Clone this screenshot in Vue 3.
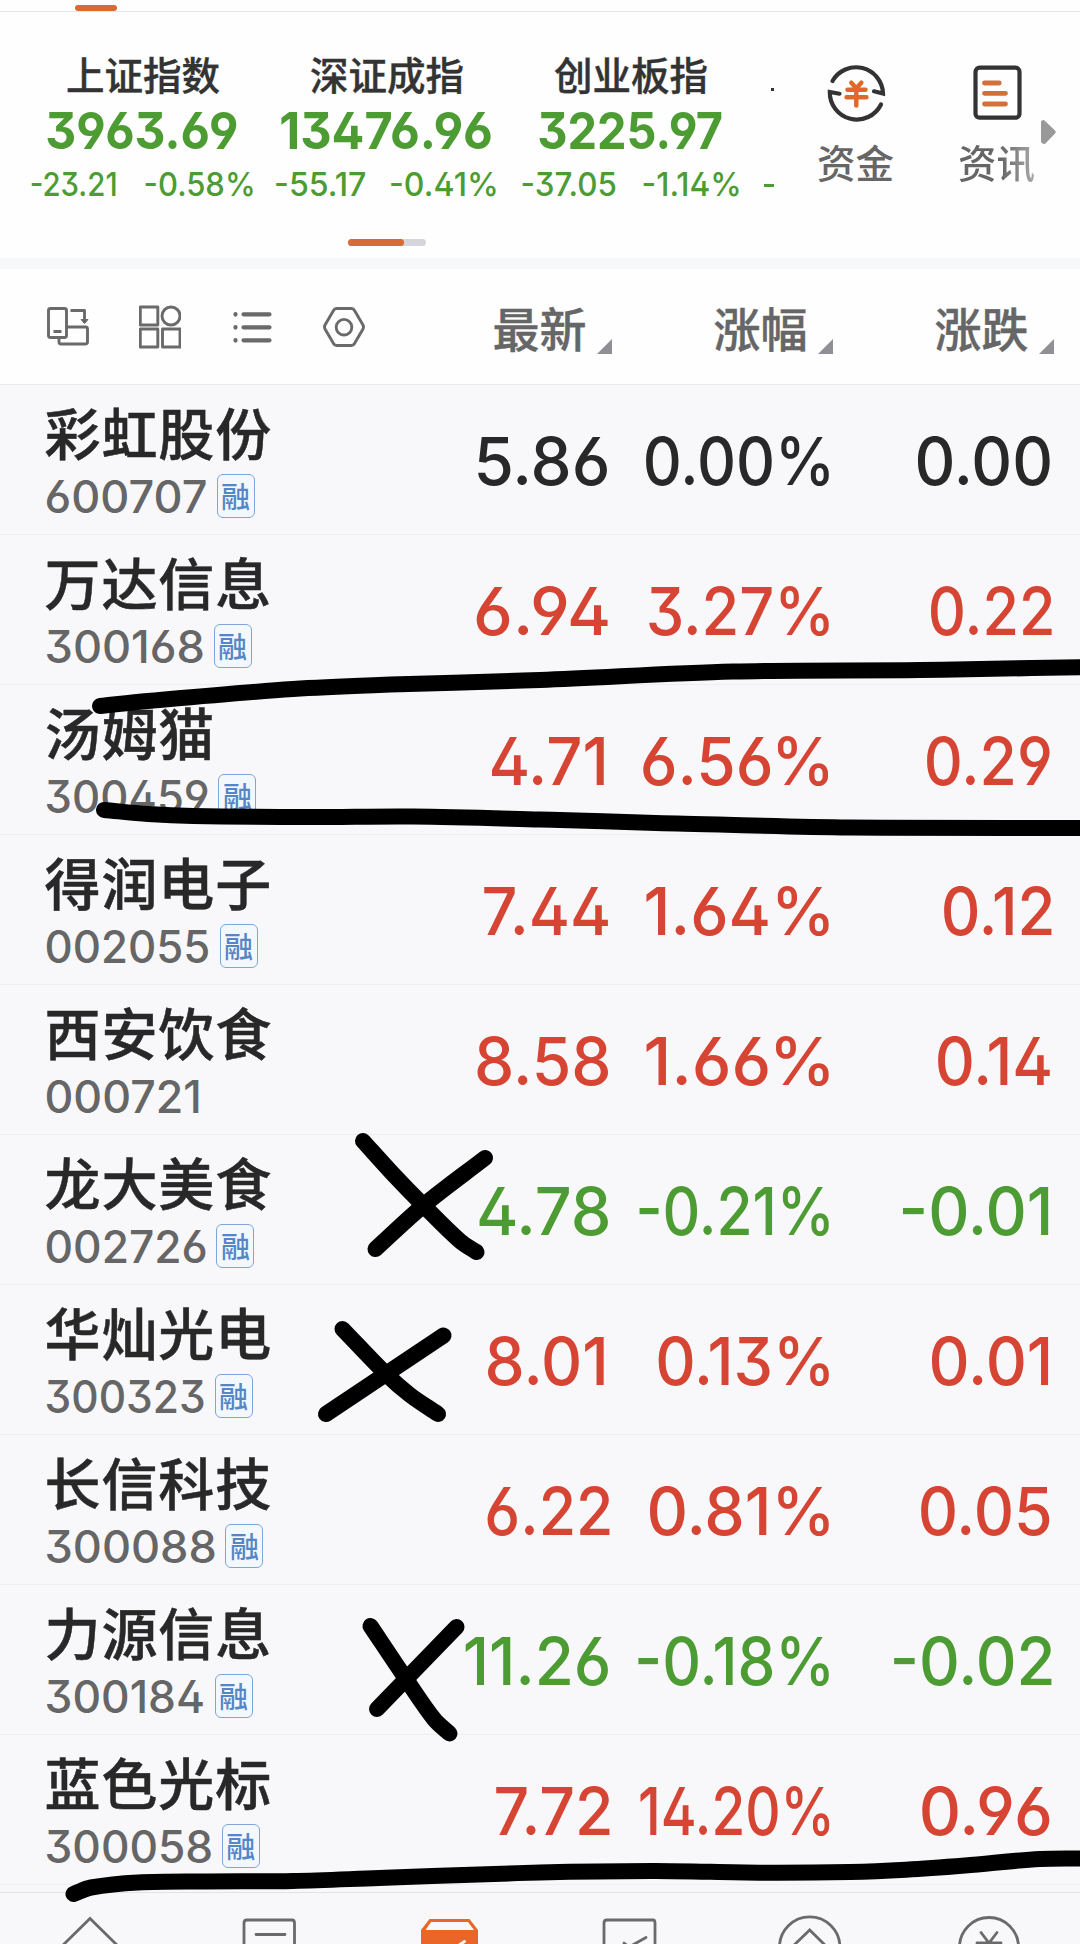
<script setup>
const indices = [
  {
    name: '上证指数',
    value: ['3963.69', 46.5, 238],
    change: ['-23.21', 31, 117],
    percent: ['-0.58%', 145, 254],
  },
  {
    name: '深证成指',
    value: ['13476.96', 280.6, 492.4],
    change: ['-55.17', 275.5, 366.5],
    percent: ['-0.41%', 390.5, 497],
  },
  {
    name: '创业板指',
    value: ['3225.97', 538.5, 723],
    change: ['-37.05', 522, 616.5],
    percent: ['-1.14%', 643, 740],
  },
];

// each figure is [text, left ink edge, right ink edge] on the 1080 wide screen
const stocks = [
  { name: '彩虹股份', code: ['600707', 46, 206.6], margin: true, trend: 'flat', price: ['5.86', 477, 608], percent: ['0.00%', 645, 830], change: ['0.00', 917, 1050.5] },
  { name: '万达信息', code: ['300168', 46, 203.6], margin: true, trend: 'up', price: ['6.94', 475.5, 609], percent: ['3.27%', 648, 830], change: ['0.22', 930, 1053] },
  { name: '汤姆猫', code: ['300459', 46, 208.4], margin: true, trend: 'up', price: ['4.71', 491, 605.5], percent: ['6.56%', 642, 829.5], change: ['0.29', 926, 1050.5] },
  { name: '得润电子', code: ['002055', 46, 209.5], margin: true, trend: 'up', price: ['7.44', 483, 609], percent: ['1.64%', 646, 830], change: ['0.12', 943, 1053] },
  { name: '西安饮食', code: ['000721', 46, 200], margin: false, trend: 'up', price: ['8.58', 476.5, 609], percent: ['1.66%', 646, 830], change: ['0.14', 937, 1051] },
  { name: '龙大美食', code: ['002726', 46, 206.4], margin: true, trend: 'down', price: ['4.78', 478.5, 609], percent: ['-0.21%', 638.5, 830], change: ['-0.01', 902, 1050] },
  { name: '华灿光电', code: ['300323', 46, 204.5], margin: true, trend: 'up', price: ['8.01', 487, 605.5], percent: ['0.13%', 657.5, 830], change: ['0.01', 931, 1050] },
  { name: '长信科技', code: ['300088', 46, 215.4], margin: true, trend: 'up', price: ['6.22', 486.5, 611], percent: ['0.81%', 649, 830], change: ['0.05', 920, 1051] },
  { name: '力源信息', code: ['300184', 46, 204.5], margin: true, trend: 'down', price: ['11.26', 465, 609], percent: ['-0.18%', 637.5, 830], change: ['-0.02', 893, 1053] },
  { name: '蓝色光标', code: ['300058', 46, 211.8], margin: true, trend: 'up', price: ['7.72', 495, 611], percent: ['14.20%', 640, 830.5], change: ['0.96', 921, 1050.5] },
];

const columns = ['最新', '涨幅', '涨跌'];

const strokes = [
  [[100, 706], [148, 701], [293, 689], [379, 685], [540, 680], [733, 671.5], [920, 670], [1090, 667]],
  [[104, 810], [148, 814], [193, 816], [310, 817], [413, 816.5], [540, 819.5], [677, 823.5], [850, 827.5], [1090, 828]],
  [[363, 1141], [392, 1173], [424, 1206], [460, 1241], [476.5, 1252]],
  [[485, 1158], [424, 1205], [375.5, 1249]],
  [[342.5, 1329], [386, 1374], [410, 1395], [438, 1414]],
  [[443.5, 1335.5], [326, 1414]],
  [[370.5, 1626], [404, 1676], [434, 1719], [449.5, 1733.5]],
  [[456.5, 1627], [377, 1709]],
  [[73.5, 1894], [91, 1887.5], [138, 1882.5], [207, 1881.5], [293, 1881], [379, 1878], [540, 1872.5], [655, 1871], [760, 1872.7], [850, 1872], [906, 1869.7], [965, 1865.5], [1040, 1859], [1090, 1858.5]],
].map(smoothPath);

// Catmull-Rom spline through the points, written as cubic segments
function smoothPath(points) {
  let d = `M${points[0]}`;
  for (let i = 0; i < points.length - 1; i += 1) {
    const p0 = points[i - 1] || points[i];
    const p1 = points[i];
    const p2 = points[i + 1];
    const p3 = points[i + 2] || p2;
    const length = Math.hypot(p2[0] - p1[0], p2[1] - p1[1]) / 3;
    const start = direction(p0, p2);
    const end = direction(p1, p3);
    d += `C${p1[0] + start.x * length} ${p1[1] + start.y * length} ${p2[0] - end.x * length} ${p2[1] - end.y * length} ${p2[0]} ${p2[1]}`;
  }
  return d;
}

function direction(from, to) {
  const length = Math.hypot(to[0] - from[0], to[1] - from[1]);
  return { x: (to[0] - from[0]) / length, y: (to[1] - from[1]) / length };
}

const context = document.createElement('canvas').getContext('2d');

// text attributes that make the drawn glyphs run from left to right
function fit([text, left, right], size, weight) {
  context.font = `${weight} ${size}px Inter`;
  const metrics = context.measureText(text);
  const before = -metrics.actualBoundingBoxLeft;
  const after = metrics.width - metrics.actualBoundingBoxRight;
  const scale = (right - left - 1.4) / (metrics.width - before - after);
  return {
    x: left + 0.5 - before * scale,
    textLength: metrics.width * scale,
    lengthAdjust: 'spacingAndGlyphs',
    'font-size': size,
    'font-weight': weight,
  };
}

function codeWidth(stock) {
  return stock.code[2] - 46;
}
</script>

<template>
  <div class="screen">
    <div class="tabs"><span class="tabs__active"></span></div>

    <section class="market">
      <div class="market__main">
        <div class="market__strip">
          <div v-for="(item, index) in indices" :key="item.name" class="index">
            <div class="index__name">{{ item.name }}</div>
            <svg class="index__figures" :viewBox="`${21 + index * 244} 0 244 110`">
              <text y="48" v-bind="fit(item.value, 51.5, 650)">{{ item.value[0] }}</text>
              <text y="94.5" v-bind="fit(item.change, 33, 500)">{{ item.change[0] }}</text>
              <text y="94.5" v-bind="fit(item.percent, 33, 500)">{{ item.percent[0] }}</text>
            </svg>
          </div>
          <div class="index index--next">
            <i class="index__dot"></i>
            <i class="index__dash"></i>
          </div>
        </div>
        <div class="market__links">
          <div class="link">
            <svg width="64" height="64" viewBox="0 0 64 64" fill="none" stroke="#333" stroke-width="4.2" stroke-linecap="round">
              <path d="M8.500 20A27 27 0 0 1 59 32.500L50 30.300" />
              <path d="M57 43.500A27 27 0 0 1 5.800 31L15.500 32.700" />
              <path d="M27.300 21.700l5 5.500 5-5.500M23.500 28.700h18M22.500 36.300h20M32.300 27v17.500" stroke="#e2672a" stroke-width="4.4" />
            </svg>
            <span>资金</span>
          </div>
          <div class="link">
            <svg width="64" height="64" viewBox="0 0 64 64" fill="none" stroke="#333" stroke-width="4.2" stroke-linecap="round">
              <rect x="10.500" y="6.700" width="44" height="50" rx="4" />
              <path d="M19.500 22H34.200M19.500 32.300H40.500M19.500 43H40.500" stroke="#d3703a" stroke-width="4.8" />
            </svg>
            <span class="fade">资讯</span>
          </div>
          <svg class="market__more" width="15" height="24" viewBox="0 0 15 24"><path d="M0 2Q0 0 3 0L14 10.5Q15.500 12 14 13.5L4 24Q0 24 0 21Z" fill="#999" /></svg>
        </div>
      </div>
      <div class="pager"><span></span></div>
    </section>

    <header class="toolbar">
      <div class="toolbar__icons">
        <svg viewBox="0 0 42 44">
          <rect x="1.500" y="3.500" width="18" height="29" rx="2" />
          <path d="M6.500 26.500h8M12 33v4q0 2 2 2h24q2.500 0 2.500-2V24q0-2-2-2H20M23.500 5.500H37.500V18" />
          <path d="M34 14.500h7l-3.500 4z" fill="#666" stroke-width="1" />
        </svg>
        <svg viewBox="0 0 42 44">
          <rect x="1.300" y="2" width="17.500" height="18" />
          <circle cx="32" cy="11" r="9" />
          <rect x="1.300" y="24" width="17.500" height="18" />
          <rect x="23.500" y="24" width="17.500" height="18" />
        </svg>
        <svg viewBox="0 0 42 44">
          <path class="bold" d="M4.500 9v.6M4.500 22v.6M4.500 35v.6M12.500 9.300H38.500M12.500 22.300H38.500M12.500 35.300H38.500" />
        </svg>
        <svg viewBox="0 0 42 44">
          <path d="M13.500 3.500h15q2 0 3 2l8.500 14.500q1 2 0 4L31.500 38.500q-1 2-3 2h-15q-2 0-3-2L2 24q-1-2 0-4L10.500 5.500q1-2 3-2z" />
          <circle cx="21" cy="22.200" r="7.800" />
        </svg>
      </div>
      <div v-for="column in columns" :key="column" class="toolbar__column">
        <span>{{ column }}</span>
        <i class="sort"></i>
      </div>
    </header>

    <main class="list">
      <div v-for="stock in stocks" :key="stock.name" class="row" :class="`row--${stock.trend}`">
        <div class="row__title">
          <div class="row__name">{{ stock.name }}</div>
          <div class="row__meta">
            <svg class="row__code" :style="{ width: `${codeWidth(stock)}px` }" :viewBox="`46 0 ${codeWidth(stock)} 44`">
              <text y="39" v-bind="fit(stock.code, 45, 450)">{{ stock.code[0] }}</text>
            </svg>
            <span v-if="stock.margin" class="row__badge">融</span>
          </div>
        </div>
        <svg viewBox="440 0 180 149"><text y="99.700" v-bind="fit(stock.price, 66, 520)">{{ stock.price[0] }}</text></svg>
        <svg viewBox="620 0 220 149"><text y="99.700" v-bind="fit(stock.percent, 66, 520)">{{ stock.percent[0] }}</text></svg>
        <svg viewBox="840 0 240 149"><text y="99.700" v-bind="fit(stock.change, 66, 520)">{{ stock.change[0] }}</text></svg>
      </div>
    </main>

    <nav class="nav">
      <svg viewBox="0 0 180 51"><path d="M60 55L90 25.500L120 55" /></svg>
      <svg viewBox="0 0 180 51"><path d="M64 55V30q0-3 3-3h45q2.500 0 2.500 3v25M76 41.500h29" /></svg>
      <svg viewBox="0 0 180 51">
        <path d="M61 37L69.500 26h40L118 37v18H61z" fill="#e96528" stroke="none" />
        <path d="M65.500 37L71 29h37l6 8z" fill="#f8f8fb" stroke="none" />
        <path d="M90 58l14.500-9.500" stroke="#fff" />
      </svg>
      <svg viewBox="0 0 180 51"><path d="M64 55V30q0-3 3-3h46q2 0 2 3v25M84 50l5 4 17-9.500" /></svg>
      <svg viewBox="0 0 180 51"><circle cx="89.700" cy="54" r="30.200" /><path d="M71 55L89.700 37L108 55" /></svg>
      <svg viewBox="0 0 180 51"><circle cx="89" cy="54" r="29.500" /><path d="M81 39.500L89 50L97 39.500M77 50H101M89 50V55" /></svg>
    </nav>

    <svg class="marks" width="1080" height="1944" viewBox="0 0 1080 1944">
      <path v-for="stroke in strokes" :key="stroke" :d="stroke" />
    </svg>
  </div>
</template>

<style>
body {
  margin: 0;
}
</style>

<style scoped>
.screen {
  position: relative;
  width: 1080px;
  height: 1944px;
  overflow: hidden;
  display: flex;
  flex-direction: column;
  background: #f8f8fb;
  color: #282828;
  font-family: 'Noto Sans CJK SC', sans-serif;
}

svg {
  display: block;
  flex: none;
}

text {
  font-family: Inter, sans-serif;
  font-feature-settings: 'cv03', 'cv04', 'cv09', 'ss01';
  fill: currentColor;
}

.tabs {
  box-sizing: border-box;
  flex: none;
  height: 12px;
  padding: 5px 0 0 75px;
  border-bottom: 1px solid #e6e6e6;
  background: #fefefe;
}

.tabs__active {
  display: block;
  width: 42px;
  height: 6px;
  border-radius: 3px;
  background: #d96a33;
}

.market {
  box-sizing: border-box;
  flex: none;
  height: 257px;
  border-bottom: 11px solid #f7f8fa;
  background: #fefefe;
}

.market__main {
  display: flex;
  height: 227px;
}

.market__strip {
  box-sizing: border-box;
  display: flex;
  flex: none;
  width: 774px;
  padding: 32px 0 0 21px;
  overflow: hidden;
}

.index {
  flex: none;
  width: 244px;
}

.index__name {
  height: 57px;
  line-height: 59px;
  font-size: 38.5px;
  font-weight: 500;
  text-align: center;
  color: #333;
  -webkit-text-stroke: 0.4px #333;
}

.index__figures {
  width: 244px;
  height: 110px;
  overflow: visible;
  color: #4c9c33;
}

.index--next {
  display: flex;
  flex-direction: column;
}

.index__dot {
  width: 3px;
  height: 3px;
  margin: 44px 0 0 18px;
  background: #333;
}

.index__dash {
  width: 10px;
  height: 3px;
  margin: 93px 0 0 11px;
  background: #4c9c33;
}

.market__links {
  display: flex;
  padding: 49px 0 0 11px;
}

.link {
  display: flex;
  flex-direction: column;
  align-items: center;
  width: 141px;
  font-size: 38.5px;
  font-weight: 500;
  line-height: 56px;
  color: #666;
}

.link span {
  margin-top: 8px;
}

.link .fade {
  background: linear-gradient(90deg, #666 55%, #aaa);
  background-clip: text;
  color: transparent;
}

.market__more {
  margin: 59px 0 0 -26px;
}

.pager {
  width: 78px;
  height: 7px;
  margin-left: 348px;
  border-radius: 4px;
  background: #d5d6db;
}

.pager span {
  display: block;
  width: 56px;
  height: 7px;
  border-radius: 4px;
  background: #d96a33;
}

.toolbar {
  box-sizing: border-box;
  display: flex;
  flex: none;
  height: 116px;
  padding-left: 47px;
  border-bottom: 1px solid #ebebed;
  background: #fefefe;
}

.toolbar__icons {
  display: flex;
  gap: 50px;
  width: 344px;
  padding-top: 35.5px;
}

.toolbar__icons svg {
  width: 42px;
  height: 44px;
  fill: none;
  stroke: #6a6a6a;
  stroke-width: 2.9px;
  stroke-linejoin: round;
}

.toolbar__icons .bold {
  stroke-width: 4.2px;
  stroke-linecap: round;
}

.toolbar__column {
  display: flex;
  justify-content: flex-end;
  width: 221px;
  font-size: 47px;
  font-weight: 500;
  line-height: 70px;
  color: #666;
  -webkit-text-stroke: 0.4px #666;
}

.toolbar__column span {
  margin-top: 22.5px;
}

.sort {
  width: 15px;
  height: 15px;
  margin: 70px 0 0 10.5px;
  background: #8f8f95;
  clip-path: polygon(100% 0, 100% 100%, 0 100%);
}

.list {
  flex: none;
  height: 1507px;
}

.row {
  box-sizing: border-box;
  display: grid;
  grid-template-columns: 394px 180px 220px 240px;
  height: 150px;
  padding-left: 46px;
  border-bottom: 1px solid #eeeeef;
}

.row > svg {
  width: 100%;
  height: 149px;
  overflow: visible;
}

.row--up > svg {
  color: #d64433;
}

.row--down > svg {
  color: #4c9c33;
}

.row__name {
  margin: 11px 0 0 -1.5px;
  font-size: 56px;
  font-weight: 500;
  line-height: 70px;
  letter-spacing: 0.9px;
  -webkit-text-stroke: 0.5px #282828;
}

.row__meta {
  display: flex;
  gap: 10px;
  height: 44px;
  margin-top: 8px;
  color: #666;
}

.row__code {
  height: 44px;
  overflow: visible;
}

.row__badge {
  box-sizing: border-box;
  width: 38px;
  height: 44px;
  border: 1.5px solid #7ea6d6;
  border-radius: 6px;
  background: #f3f8fe;
  font-size: 29px;
  font-weight: 500;
  line-height: 40px;
  text-align: center;
  color: #5586c6;
}

.nav {
  display: grid;
  grid-template-columns: repeat(6, 180px);
  flex: none;
  height: 51px;
  border-top: 1px solid #e2e2e4;
}

.nav svg {
  width: 180px;
  height: 51px;
  fill: none;
  stroke: #6a6a6a;
  stroke-width: 2.8px;
  stroke-linecap: round;
}

.marks {
  position: absolute;
  top: 0;
  left: 0;
  fill: none;
  stroke: #000;
  stroke-width: 16px;
  stroke-linecap: round;
  stroke-linejoin: round;
}
</style>
